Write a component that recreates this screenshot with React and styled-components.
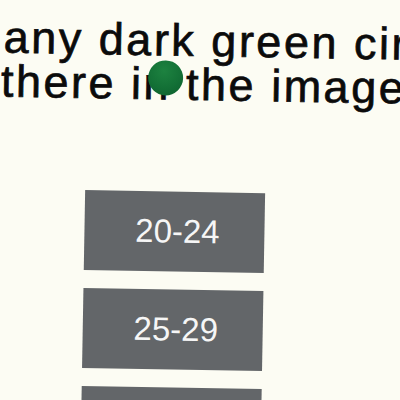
import React from "react";
import styled, { createGlobalStyle } from "styled-components";

const Global = createGlobalStyle`
  html, body {
    margin: 0;
    padding: 0;
    background: #fcfcf3;
    overflow: hidden;
  }
  body {
    font-family: "Liberation Sans", Arial, sans-serif;
  }
`;

const Stage = styled.div`
  width: 400px;
  height: 400px;
  overflow: hidden;
  background: #fcfcf3;
`;

const Tilted = styled.div`
  width: 400px;
  height: 400px;
  transform: rotate(1deg);
  transform-origin: 200px 200px;
  padding-top: 19px;
  box-sizing: border-box;
  display: flex;
  flex-direction: column;
`;

const Question = styled.div`
  position: relative;
  color: #0b0b0b;
  font-size: 45px;
  line-height: 44px;
  letter-spacing: 2.5px;
  -webkit-text-stroke: 0.7px #0b0b0b;
`;

const Line = styled.div`
  white-space: nowrap;
  overflow: visible;
  margin-left: ${(p) => p.$indent || 0}px;
`;

const Dot = styled.div`
  position: absolute;
  left: 146px;
  top: 42px;
  width: 35px;
  height: 35px;
  border-radius: 50%;
  background: radial-gradient(circle at 45% 30%, #1d8240 0%, #137036 55%, #0c5e2c 100%);
`;

const Options = styled.div`
  margin-top: 85px;
  padding-left: 85px;
  display: flex;
  flex-direction: column;
  gap: 18px;
`;

const Option = styled.div`
  width: 180px;
  height: 80px;
  flex-shrink: 0;
  box-sizing: border-box;
  padding-left: 6px;
  background: #636669;
  color: #f6f6f6;
  font-size: 33px;
  display: flex;
  align-items: center;
  justify-content: center;
`;

export default function App() {
  return (
    <Stage>
      <Global />
      <Tilted>
        <Question>
          <Line $indent={1}>any dark green circle</Line>
          <Line $indent={-1}>there in the image?</Line>
          <Dot />
        </Question>
        <Options>
          <Option>20-24</Option>
          <Option>25-29</Option>
          <Option>30-34</Option>
        </Options>
      </Tilted>
    </Stage>
  );
}
